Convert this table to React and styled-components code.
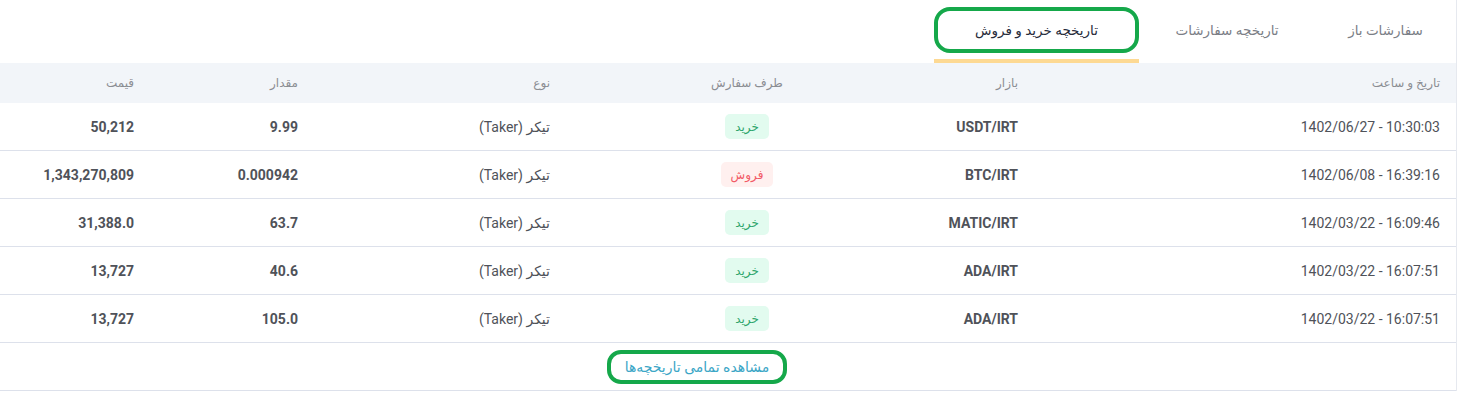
import React from "react";
import styled, { createGlobalStyle } from "styled-components";

const GlobalStyle = createGlobalStyle`
  body {
    margin: 0;
    background: #ffffff;
    font-family: Roboto, "DejaVu Sans", sans-serif;
  }
`;

const Card = styled.div`
  direction: rtl;
  width: 1457px;
  border-right: 1px solid #e6e9ef;
  background: #ffffff;
  box-sizing: border-box;
`;

const Tabs = styled.div`
  display: flex;
  height: 63px;
`;

const Tab = styled.div`
  display: flex;
  flex-direction: column;
  align-items: stretch;
  box-sizing: border-box;
  width: ${({ w }) => w}px;
  height: 63px;
  border-bottom: 4px solid ${({ active }) => (active ? "#fdd993" : "transparent")};
  cursor: pointer;
`;

const TabLabel = styled.span`
  display: flex;
  align-items: center;
  justify-content: center;
  box-sizing: border-box;
  height: 46px;
  margin-top: 7px;
  border: 4px solid ${({ marked }) => (marked ? "#15a84a" : "transparent")};
  border-radius: 16px;
  font-size: 13.5px;
  font-weight: ${({ active }) => (active ? 500 : 400)};
  color: ${({ active }) => (active ? "#262b3a" : "#7b7e86")};
  white-space: nowrap;
`;

const Grid = styled.div`
  display: grid;
  grid-template-columns: 422px 106px 362px 252px 164px 150px;
`;

const HeadRow = styled(Grid)`
  height: 40px;
  background: #f2f5f9;
`;

const HeadCell = styled.div`
  display: flex;
  align-items: center;
  justify-content: ${({ center }) => (center ? "center" : "flex-start")};
  padding: 0 16px;
  font-size: 12px;
  color: #8b8d93;
`;

const Row = styled(Grid)`
  height: 48px;
  box-sizing: border-box;
  border-bottom: 1px solid #dde1eb;
`;

const Cell = styled.div`
  display: flex;
  align-items: center;
  justify-content: ${({ center }) => (center ? "center" : "flex-start")};
  padding: 0 16px;
  font-size: 14px;
  font-weight: ${({ bold }) => (bold ? 700 : 400)};
  color: #4f5259;
  white-space: nowrap;
`;

const Latin = styled.span`
  direction: ltr;
  unicode-bidi: isolate;
`;

const Badge = styled.span`
  display: inline-flex;
  align-items: center;
  justify-content: center;
  height: 25px;
  padding: 0 10px;
  border-radius: 5px;
  font-size: 12px;
  background: ${({ sell }) => (sell ? "#fff0ef" : "#e2fbef")};
  color: ${({ sell }) => (sell ? "#f25a66" : "#2ea56c")};
`;

const Footer = styled.div`
  display: flex;
  align-items: center;
  justify-content: center;
  height: 48px;
  box-sizing: border-box;
  border-bottom: 1px solid #dde1eb;
  padding-right: 62px;
`;

const MoreLink = styled.a`
  display: inline-flex;
  align-items: center;
  box-sizing: border-box;
  height: 34px;
  margin-top: 1px;
  padding: 0 14px;
  border: 4px solid #15a84a;
  border-radius: 14px;
  font-size: 14px;
  color: #3ba6c6;
  text-decoration: none;
  cursor: pointer;
`;

const tabs = [
  { label: "سفارشات باز", width: 141 },
  { label: "تاریخچه سفارشات", width: 176 },
  { label: "تاریخچه خرید و فروش", width: 205, active: true },
];

const headers = ["تاریخ و ساعت", "بازار", "طرف سفارش", "نوع", "مقدار", "قیمت"];

const trades = [
  { date: "1402/06/27 - 10:30:03", market: "USDT/IRT", sell: false, amount: "9.99", price: "50,212" },
  { date: "1402/06/08 - 16:39:16", market: "BTC/IRT", sell: true, amount: "0.000942", price: "1,343,270,809" },
  { date: "1402/03/22 - 16:09:46", market: "MATIC/IRT", sell: false, amount: "63.7", price: "31,388.0" },
  { date: "1402/03/22 - 16:07:51", market: "ADA/IRT", sell: false, amount: "40.6", price: "13,727" },
  { date: "1402/03/22 - 16:07:51", market: "ADA/IRT", sell: false, amount: "105.0", price: "13,727" },
];

const App = () => {
  return (
    <>
      <GlobalStyle />
      <Card>
        <Tabs>
          {tabs.map((t) => (
            <Tab key={t.label} w={t.width} active={t.active}>
              <TabLabel active={t.active} marked={t.active}>
                {t.label}
              </TabLabel>
            </Tab>
          ))}
        </Tabs>
        <HeadRow>
          {headers.map((h, i) => (
            <HeadCell key={h} center={i === 2}>
              {h}
            </HeadCell>
          ))}
        </HeadRow>
        {trades.map((t, i) => (
          <Row key={i}>
            <Cell>
              <Latin>{t.date}</Latin>
            </Cell>
            <Cell bold>
              <Latin>{t.market}</Latin>
            </Cell>
            <Cell center>
              <Badge sell={t.sell}>{t.sell ? "فروش" : "خرید"}</Badge>
            </Cell>
            <Cell>تیکر (Taker)</Cell>
            <Cell bold>
              <Latin>{t.amount}</Latin>
            </Cell>
            <Cell bold>
              <Latin>{t.price}</Latin>
            </Cell>
          </Row>
        ))}
        <Footer>
          <MoreLink>مشاهده تمامی تاریخچه‌ها</MoreLink>
        </Footer>
      </Card>
    </>
  );
};

export default App;
